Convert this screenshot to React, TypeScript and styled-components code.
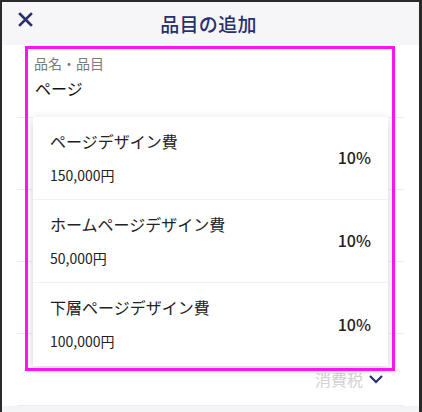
import styled, {createGlobalStyle} from "styled-components";

const GlobalStyle = createGlobalStyle`
  html, body {
    margin: 0;
    padding: 0;
    background: #2a2a2a;
  }
  body {
    font-family: "Noto Sans CJK JP", "Noto Sans", sans-serif;
  }
`;

const Screen = styled.div`
  position: relative;
  margin: 2px 3px 0 2px;
  height: 410px;
  background: #fff;
  overflow: hidden;
`;

const Header = styled.header`
  position: relative;
  height: 43px;
  display: flex;
  align-items: center;
  justify-content: center;
  background: #f6f6f9;
`;

const CloseButton = styled.button`
  position: absolute;
  left: 15px;
  top: 9px;
  width: 17px;
  height: 17px;
  padding: 0;
  border: none;
  background: none;
  display: flex;
  align-items: center;
  justify-content: center;
`;

const Title = styled.h1`
  margin: 0 0 0 -4px;
  font-size: 19px;
  font-weight: 500;
  color: #28306e;
  letter-spacing: 0.3px;
`;

const Form = styled.div`
  margin: 0 15px;
`;

const Row = styled.div<{ $height: number }>`
  height: ${(p) => p.$height}px;
  border-bottom: 1px solid #ececec;
  box-sizing: border-box;
  display: flex;
  flex-direction: column;
`;

const FieldLabel = styled.div`
  padding: 9px 0 0 17px;
  font-size: 14px;
  color: #7a7a7a;
  line-height: 18px;
`;

const FieldValue = styled.div`
  padding: 5px 0 0 18px;
  font-size: 16px;
  color: #111;
  line-height: 22px;
`;

const TaxRow = styled.div`
  flex: 1;
  display: flex;
  align-items: center;
  justify-content: flex-end;
  gap: 5px;
  padding: 18px 20px 0 0;
  font-size: 16px;
  color: #d2d2d2;
`;

const Footer = styled.div`
  height: 20px;
  background: #f4f4f6;
`;

const Menu = styled.div`
  position: absolute;
  left: 31px;
  top: 115px;
  width: 355px;
  background: #fff;
  box-shadow: 0 3px 10px rgba(0, 0, 0, 0.18);
`;

const MenuItem = styled.div`
  height: 83px;
  box-sizing: border-box;
  padding: 0 17px;
  display: flex;
  align-items: center;
  justify-content: space-between;
  border-bottom: 1px solid #f1f1f1;

  &:last-child {
    border-bottom: none;
  }
`;

const ItemText = styled.div`
  display: flex;
  flex-direction: column;
  gap: 13px;
  margin-top: -2px;
`;

const ItemName = styled.div`
  font-size: 16px;
  line-height: 22px;
  color: #222;
`;

const ItemPrice = styled.div`
  font-size: 14px;
  line-height: 20px;
  color: #222;
`;

const ItemRate = styled.div`
  font-size: 16px;
  font-weight: 500;
  color: #222;
  margin-top: -2px;
`;

const Highlight = styled.div`
  position: absolute;
  left: 23px;
  top: 44px;
  width: 370px;
  height: 325px;
  box-sizing: border-box;
  border: 3px solid #ff14f0;
  pointer-events: none;
`;

const items = [
  {name: "ページデザイン費", price: "150,000円", rate: "10%"},
  {name: "ホームページデザイン費", price: "50,000円", rate: "10%"},
  {name: "下層ページデザイン費", price: "100,000円", rate: "10%"},
];

export default function App() {
  return (
    <>
      <GlobalStyle/>
      <Screen>
        <Header>
          <CloseButton aria-label="close">
            <svg width="15" height="15" viewBox="0 0 15 15">
              <path d="M2 2 L13 13 M13 2 L2 13" stroke="#28306e" strokeWidth="2.6" strokeLinecap="square"/>
            </svg>
          </CloseButton>
          <Title>品目の追加</Title>
        </Header>
        <Form>
          <Row $height={73}>
            <FieldLabel>品名・品目</FieldLabel>
            <FieldValue>ページ</FieldValue>
          </Row>
          <Row $height={72}/>
          <Row $height={72}/>
          <Row $height={72}/>
          <Row $height={72}>
            <TaxRow>
              消費税
              <svg width="16" height="10" viewBox="0 0 16 10">
                <path d="M2 2 L8 8 L14 2" fill="none" stroke="#28306e" strokeWidth="2.2"/>
              </svg>
            </TaxRow>
          </Row>
        </Form>
        <Footer/>
        <Menu>
          {items.map((item) => (
            <MenuItem key={item.name}>
              <ItemText>
                <ItemName>{item.name}</ItemName>
                <ItemPrice>{item.price}</ItemPrice>
              </ItemText>
              <ItemRate>{item.rate}</ItemRate>
            </MenuItem>
          ))}
        </Menu>
        <Highlight/>
      </Screen>
    </>
  );
}
